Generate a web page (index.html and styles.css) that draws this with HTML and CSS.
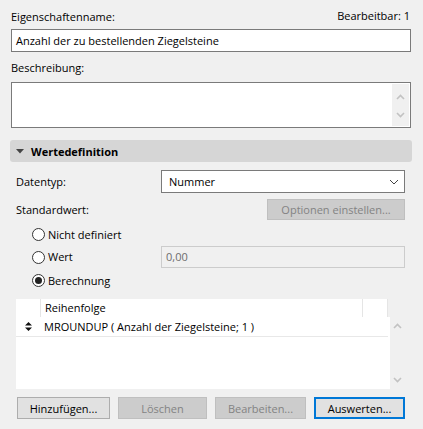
FILE: index.html
```html
<!DOCTYPE html>
<html lang="de">
<head>
<meta charset="utf-8">
<title>Eigenschaften</title>
<link rel="stylesheet" href="styles.css">
</head>
<body>
<div class="dialog">
  <div class="head-row">
    <span class="label">Eigenschaftenname:</span>
    <span class="label">Bearbeitbar: 1</span>
  </div>
  <div class="field">Anzahl der zu bestellenden Ziegelsteine</div>
  <div class="label desc-label">Beschreibung:</div>
  <div class="textarea">
    <div class="vscroll">
      <svg class="arrow" width="9" height="6" viewBox="0 0 9 6"><path d="M1 5 L4.5 1.5 L8 5" fill="none" stroke="#c2c2c2" stroke-width="1.6"/></svg>
      <svg class="arrow" width="9" height="6" viewBox="0 0 9 6"><path d="M1 1 L4.5 4.5 L8 1" fill="none" stroke="#c2c2c2" stroke-width="1.6"/></svg>
    </div>
  </div>

  <div class="section-head">
    <svg class="tri" width="8" height="5" viewBox="0 0 8 5"><path d="M0 0 H8 L4 4.5 Z" fill="#444"/></svg>
    <span>Wertedefinition</span>
  </div>

  <div class="section">
    <div class="grid-row datatype">
      <span class="label">Datentyp:</span>
      <div class="select">
        <span>Nummer</span>
        <svg width="10" height="6" viewBox="0 0 10 6"><path d="M1 1 L5 5 L9 1" fill="none" stroke="#444" stroke-width="1"/></svg>
      </div>
    </div>
    <div class="std-row">
      <span class="label">Standardwert:</span>
      <button class="btn disabled options">Optionen einstellen...</button>
    </div>

    <div class="radios">
      <div class="radio-row">
        <span class="radio"></span><span class="label">Nicht definiert</span>
      </div>
      <div class="radio-row value-row">
        <div class="radio-cell"><span class="radio"></span><span class="label">Wert</span></div>
        <div class="value-field">0,00</div>
      </div>
      <div class="radio-row">
        <span class="radio checked"></span><span class="label">Berechnung</span>
      </div>
    </div>

    <div class="list-wrap">
      <div class="list">
        <div class="list-head">
          <span class="col-sort"></span>
          <span class="col-main">Reihenfolge</span>
          <span class="col-end"></span>
        </div>
        <div class="list-body">
          <div class="list-item">
            <span class="col-sort">
              <svg width="7" height="9" viewBox="0 0 7 9"><path d="M3.5 0 L7 3.5 H0 Z M0 5.5 H7 L3.5 9 Z" fill="#111"/></svg>
            </span>
            <span class="col-main">MROUNDUP ( Anzahl der Ziegelsteine; 1 )</span>
          </div>
        </div>
      </div>
      <div class="list-scroll">
        <svg width="9" height="6" viewBox="0 0 9 6"><path d="M1 5 L4.5 1.5 L8 5" fill="none" stroke="#c2c2c2" stroke-width="1.6"/></svg>
        <svg width="9" height="6" viewBox="0 0 9 6"><path d="M1 1 L4.5 4.5 L8 1" fill="none" stroke="#c2c2c2" stroke-width="1.6"/></svg>
      </div>
    </div>

    <div class="buttons">
      <button class="btn b-add">Hinzufügen...</button>
      <button class="btn disabled b-del">Löschen</button>
      <button class="btn disabled b-edit">Bearbeiten...</button>
      <button class="btn default b-eval">Auswerten...</button>
    </div>
  </div>
</div>
</body>
</html>
```

FILE: styles.css
```css
* { box-sizing: border-box; }

html, body {
  margin: 0;
  padding: 0;
  background: #f0f0f0;
}

body {
  font-family: "Open Sans", "Noto Sans", sans-serif;
  font-size: 11px;
  color: #000;
  width: 423px;
  height: 429px;
  overflow: hidden;
}

.dialog {
  padding: 9px 12px 0 11px;
}

.label {
  line-height: 16px;
  white-space: nowrap;
}

.head-row {
  display: flex;
  justify-content: space-between;
  align-items: flex-start;
  height: 20px;
  padding-right: 1px;
}
.head-row .label:last-child {
  margin-top: -1px;
}

.field {
  height: 23px;
  border: 1px solid #7a7a7a;
  background: #fff;
  padding: 0 4px;
  line-height: 21px;
}

.desc-label {
  display: block;
  margin-top: 8px;
  height: 22px;
}

.textarea {
  height: 46px;
  border: 1px solid #7a7a7a;
  background: #fff;
  display: flex;
  justify-content: flex-end;
  padding: 1px;
}

.vscroll {
  width: 17px;
  background: #f0f0f0;
  display: flex;
  flex-direction: column;
  justify-content: space-between;
  align-items: center;
  padding: 10px 0 8px;
}

.section-head {
  margin: 12px -1px 0 -1px;
  height: 22px;
  background: #d6d6d6;
  border-radius: 3px;
  display: flex;
  align-items: center;
  font-weight: bold;
  padding-left: 6px;
}
.section-head .tri {
  margin-right: 7px;
}

.section {
  padding: 8px 6px 0 5px;
}

.grid-row {
  display: grid;
  grid-template-columns: 145px 1fr;
  align-items: center;
}

.select {
  height: 23px;
  border: 1px solid #7a7a7a;
  background: #fff;
  display: flex;
  align-items: center;
  justify-content: space-between;
  padding: 0 5px 0 7px;
}

.std-row {
  margin-top: 6px;
  display: flex;
  justify-content: space-between;
  align-items: center;
  height: 21px;
}

.btn {
  font-family: inherit;
  font-size: 11px;
  color: #000;
  background: #e1e1e1;
  border: 1px solid #adadad;
  height: 22px;
  padding: 0;
  margin: 0;
}
.btn.disabled {
  background: #cccccc;
  border-color: #bfbfbf;
  color: #838383;
}
.btn.default {
  border: 2px solid #0078d7;
}
.options {
  width: 138px;
  height: 21px;
}

.radios {
  margin-top: 3px;
  padding-left: 16px;
}
.radio-row {
  display: flex;
  align-items: center;
  height: 23px;
}
.radio-row.value-row {
  display: grid;
  grid-template-columns: 129px 1fr;
  height: 22px;
}
.radio-row:last-child {
  height: 25px;
}
.radio-cell {
  display: flex;
  align-items: center;
}
.radio {
  width: 13px;
  height: 13px;
  border: 1px solid #333;
  border-radius: 50%;
  background: #fff;
  margin-right: 3px;
  flex: none;
  position: relative;
}
.radio.checked::after {
  content: "";
  position: absolute;
  left: 2px;
  top: 2px;
  width: 7px;
  height: 7px;
  border-radius: 50%;
  background: #222;
}

.value-field {
  height: 22px;
  border: 1px solid #cccccc;
  background: #f0f0f0;
  color: #6d6d6d;
  padding: 0 4px;
  line-height: 20px;
}

.list-wrap {
  margin-top: 6px;
  display: flex;
  height: 90px;
}
.list {
  width: 374px;
  display: flex;
  flex-direction: column;
}
.list-head {
  display: flex;
  height: 18px;
  width: 372px;
  background: #fff;
  line-height: 18px;
}
.list-head .col-main {
  border-left: 1px solid #e5e5e5;
  border-right: 1px solid #e5e5e5;
}
.col-sort {
  width: 24px;
  flex: none;
  display: flex;
  align-items: center;
  justify-content: center;
}
.col-main {
  width: 323px;
  flex: none;
  padding-left: 4px;
  white-space: nowrap;
}
.col-end {
  flex: 1;
  border-right: 1px solid #e5e5e5;
}
.list-body {
  flex: 1;
  background: #fff;
}
.list-item {
  display: flex;
  height: 20px;
  border-bottom: 1px solid #e8e8e8;
  width: 372px;
  line-height: 19px;
}
.list-item .col-main {
  padding-left: 4px;
}
.list-scroll {
  flex: 1;
  display: flex;
  flex-direction: column;
  align-items: center;
  justify-content: space-between;
  padding: 24px 0 6px;
}

.buttons {
  margin-top: 8px;
  padding-left: 1px;
  display: flex;
  gap: 8px;
}
.b-add { width: 93px; }
.b-del { width: 89px; }
.b-edit { width: 91px; }
.b-eval { width: 91px; }
```
